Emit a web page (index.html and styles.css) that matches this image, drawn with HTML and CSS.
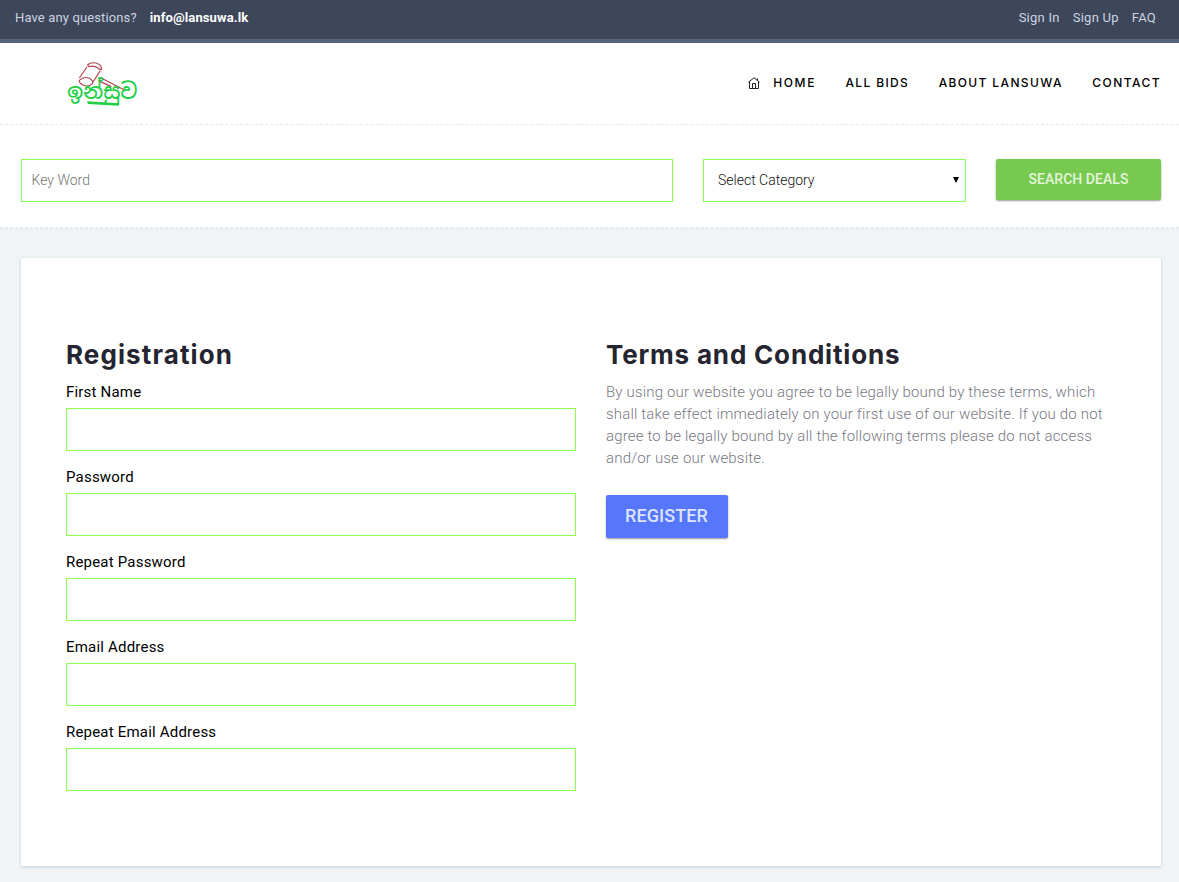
FILE: index.html
```html
<!DOCTYPE html>
<html lang="en">
<head>
<meta charset="utf-8">
<title>Lansuwa - Registration</title>
<link rel="stylesheet" href="styles.css">
</head>
<body>
<div class="topbar">
  <div class="topbar-left"><span class="question">Have any questions?</span><a class="mail">info@lansuwa.lk</a></div>
  <nav class="topbar-right"><a class="signin">Sign In</a><a class="signup">Sign Up</a><a class="faq">FAQ</a></nav>
</div>
<header class="header">
  <svg class="logo" width="110" height="70" viewBox="0 0 330 210" role="img" aria-label="Lansuwa">
    <g fill="none" stroke="#b0454f" stroke-width="3.6">
      <path d="M113 45Q121 36 137 39Q154 43 155 57Q151 61 144 54Q132 46 116 50Z"/>
      <path d="M111 51L88 84M151 62L127 99M88 91Q101 79 117 84Q132 92 127 101Q116 113 99 105Q87 99 88 91Z"/>
      <path d="M149 82L222 119M145 92L184 110"/>
    </g>
    <text class="logo-word" x="52" y="148" textLength="210" lengthAdjust="spacingAndGlyphs">ඉන්සුව</text>
    <path d="M111 154L207 160L206 167L114 162Z" fill="#20cf43"/>
  </svg>
  <nav class="menu">
    <a class="home"><svg width="12" height="12" viewBox="0 0 12 12" fill="none" stroke="#222" stroke-width="1"><path d="M.4 5.2L6 .8L11.6 5.2M1.5 4.5V11.5H10.5V4.5M4.5 11.5V6.5H7.5V11.5M9.5 3V1.5"/></svg><span class="w-home">HOME</span></a>
    <a class="w-bids">ALL BIDS</a><a class="w-about">ABOUT LANSUWA</a><a class="w-contact">CONTACT</a>
  </nav>
</header>
<form class="search">
  <input class="field keyword" placeholder="Key Word">
  <div class="field category"><span>Select Category</span><i class="arrow"></i></div>
  <button type="button" class="btn btn-search"><span>SEARCH DEALS</span></button>
</form>
<main class="card">
  <section class="column">
    <h2 class="title-reg">Registration</h2>
    <label>First Name<input class="field"></label>
    <label>Password<input class="field" type="password"></label>
    <label>Repeat Password<input class="field" type="password"></label>
    <label>Email Address<input class="field"></label>
    <label>Repeat Email Address<input class="field"></label>
  </section>
  <section class="column">
    <h2 class="title-terms">Terms and Conditions</h2>
    <p>By using our website you agree to be legally bound by these terms, which<br>shall take effect immediately on your first use of our website. If you do not<br>agree to be legally bound by all the following terms please do not access<br>and/or use our website.</p>
    <button type="button" class="btn btn-register"><span>REGISTER</span></button>
  </section>
</main>
</body>
</html>
```
FILE: styles.css
```css
* { box-sizing: border-box; }
body { margin: 0; height: 882px; overflow: hidden; background: #f0f4f7; font-family: Roboto, sans-serif; color: #000; }
.topbar { display: flex; justify-content: space-between; height: 43px; padding: 8px 23px 0 15px; background: #3d4759; border-bottom: 4px solid #56637a; color: #ccd4e2; font-size: 13px; line-height: 20px; letter-spacing: .13px; }
.topbar-left { display: flex; gap: 13px; }
.topbar-right { display: flex; gap: 13px; letter-spacing: .25px; }
.mail { color: #fff; font-weight: 700; }
.header { display: flex; justify-content: space-between; height: 82px; padding: 7px 18px 0 50px; background: #fff; border-bottom: 1px dashed #eaeaea; }
.logo { flex: none; }
.logo-word { fill: #20cf43; font: 500 66px "Noto Sans Sinhala", "Noto Sans", sans-serif; }
.menu { display: flex; gap: 29.5px; height: 66px; font: 500 12px/66px Inter, sans-serif; letter-spacing: 1.45px; white-space: nowrap; }
.w-bids { letter-spacing: 1.35px; }
.w-about { letter-spacing: 1.37px; }
.home { display: flex; align-items: center; gap: 13px; letter-spacing: 1.6px; }
.search { display: flex; gap: 30px; height: 103px; padding: 34px 18px 0 21px; background: #fff; border-bottom: 1px dashed #e5e8ea; box-shadow: 0 1px 2px #e6ebef; }
.field { display: block; height: 43px; border: 1px solid #8dff50; border-radius: 0; background: #fff; outline: 0; font: 300 14px Roboto, sans-serif; }
.keyword { width: 652px; padding: 0 10px 2px 9.5px; }
.keyword::placeholder { color: #777; opacity: 1; }
.category { display: flex; align-items: center; justify-content: space-between; width: 263px; padding: 0 6px 2px 14px; color: #111; }
.arrow { border: solid transparent; border-width: 6px 3px 0; border-top-color: #000; }
.btn { display: block; padding: 0; border: 0; border-radius: 2px; box-shadow: 0 1px 2px rgba(0, 0, 0, .4); font-family: Roboto, sans-serif; font-weight: 500; }
.btn-search { width: 165px; height: 41px; padding-bottom: 2px; background: #77ca4f; color: #e4f4dc; font-size: 14px; letter-spacing: .05px; }
.card { display: grid; grid-template-columns: 510px 510px; gap: 30px; width: 1140px; height: 608px; margin: 30px 0 0 21px; padding: 79px 45px 0; background: #fff; box-shadow: 0 1px 3px #bccbd7; }
h2 { margin: 0 0 9px; color: #242530; font: 700 26px/35px Inter, sans-serif; letter-spacing: 1.1px; white-space: nowrap; }
.title-terms { letter-spacing: .82px; }
label { display: block; height: 85px; font-size: 15px; line-height: 22px; letter-spacing: .2px; }
label .field { width: 510px; margin-top: 5px; padding: 0 10px; }
p { margin: 0 0 26px; color: #777783; font-size: 15px; font-weight: 300; line-height: 22px; white-space: nowrap; letter-spacing: .175px; }
.btn-register { width: 122px; height: 43px; padding: 0 1px 2px 0; background: #5677fc; color: #dde4ff; font-size: 18px; letter-spacing: .1px; }
```
